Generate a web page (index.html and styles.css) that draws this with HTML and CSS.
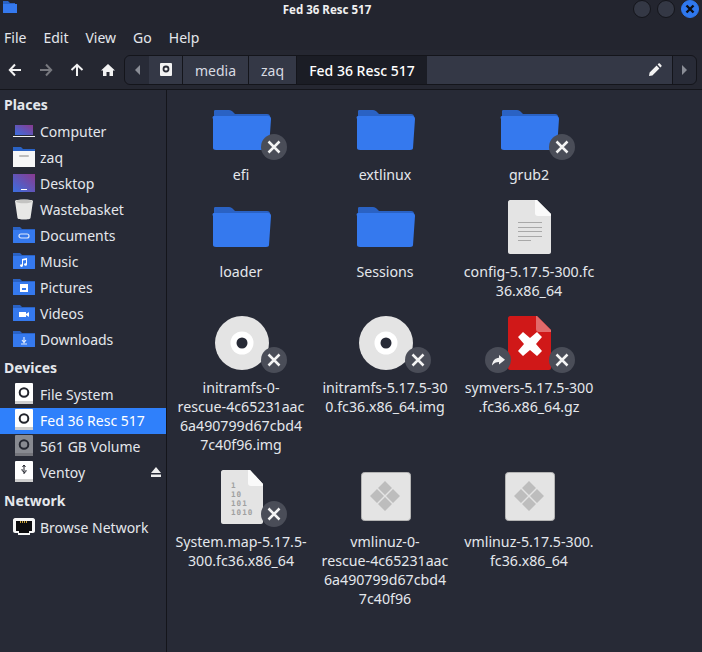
FILE: index.html
```html
<!DOCTYPE html>
<html lang="en">
<head>
    <meta charset="UTF-8">
    <meta name="viewport" content="width=device-width, initial-scale=1.0">
    <title>Fed 36 Resc 517</title>
    <link rel="stylesheet" href="styles.css">
</head>
<body>

<!-- shared icons -->
<svg class="defs" aria-hidden="true">
    <defs>
        <linearGradient id="screen" x1="0" y1="1" x2="1" y2="0">
            <stop offset="0" stop-color="#3a6fe0"/>
            <stop offset="1" stop-color="#8a3a8e"/>
        </linearGradient>
        <symbol id="folder-big" viewBox="0 0 64 64">
            <path fill="#2a62c4" d="M6 12h14c2 0 3 1 4 2l2 2h32c2 0 3 1 3 3v10H5V14c0-1 0-2 1-2z"/>
            <path fill="#3579ee" d="M5 18h54c2 0 3 1 3 3l-2 29c0 1-1 2-3 2H7c-2 0-3-1-3-2L4 21c-1-2 0-3 1-3z"/>
        </symbol>
        <symbol id="disc" viewBox="0 0 64 64">
            <circle cx="33" cy="32" r="27" fill="#e4e4e4"/>
            <circle cx="33" cy="32" r="11.5" fill="#fff"/>
            <circle cx="33" cy="32" r="5.5" fill="#272a36"/>
        </symbol>
        <symbol id="exec" viewBox="0 0 64 64">
            <rect x="8.500" y="7.500" width="49" height="48" rx="3" fill="#e4e4e4" stroke="#b4b4b4" stroke-width="1"/>
            <path fill="#bdbdbd" d="M32 16l7 7-7 7-7-7zM24 24l7 7-7 7-7-7zM40 24l7 7-7 7-7-7zM32 32l7 7-7 7-7-7z"/>
        </symbol>
        <symbol id="small-folder" viewBox="0 0 22 22">
            <path fill="#2a62c4" d="M0 3h7l2 2h13v5H0z"/>
            <path fill="#3579ee" d="M0 6h22v12c0 1 0 1-1 1H1c-1 0-1 0-1-1z"/>
        </symbol>
        <symbol id="drive" viewBox="0 0 22 22">
            <rect x="2" y="0" width="18" height="21" rx="1" fill="#fff"/>
            <rect x="2" y="18" width="18" height="3" fill="#cfcfcf"/>
            <circle cx="11" cy="9.500" r="4.300" fill="none" stroke="#22242c" stroke-width="2"/>
        </symbol>
    </defs>
</svg>

<div class="window">

    <header class="titlebar">
        <svg class="title-icon" width="16" height="16" viewBox="0 0 16 16">
            <path fill="#2a62c4" d="M2 1h5l2 2h5v4H2z"/>
            <path fill="#3579ee" d="M2 4h14v9H3c-1 0-1 0-1-1z"/>
        </svg>
        <span class="title-text">Fed 36 Resc 517</span>
        <div class="window-buttons">
            <span class="win-btn"></span>
            <span class="win-btn"></span>
            <span class="win-btn win-close">
                <svg width="10" height="10" viewBox="0 0 10 10"><path d="M1.500 1.500l7 7M8.500 1.500l-7 7" stroke="#0c0e14" stroke-width="2.400" fill="none"/></svg>
            </span>
        </div>
    </header>

    <nav class="menubar">
        <span class="menu-item">File</span>
        <span class="menu-item">Edit</span>
        <span class="menu-item">View</span>
        <span class="menu-item">Go</span>
        <span class="menu-item">Help</span>
    </nav>

    <div class="toolbar">
        <div class="nav-buttons">
            <svg class="nav-icon" width="14" height="14" viewBox="0 0 14 14"><path d="M13 7H2M7 1.500L1.800 7 7 12.500" fill="none" stroke="#f2f2f2" stroke-width="2"/></svg>
            <svg class="nav-icon dim" width="14" height="14" viewBox="0 0 14 14"><path d="M1 7h11M7 1.500L12.200 7 7 12.500" fill="none" stroke="#f2f2f2" stroke-width="2"/></svg>
            <svg class="nav-icon" width="14" height="14" viewBox="0 0 14 14"><path d="M7 13V2M1.500 7L7 1.800 12.500 7" fill="none" stroke="#f2f2f2" stroke-width="2"/></svg>
            <svg class="nav-icon" width="14" height="14" viewBox="0 0 14 14"><path fill="#f2f2f2" d="M7 1l7 6.500h-2V13H8.500V9h-3v4H2V7.500H0z"/></svg>
        </div>
        <div class="pathbar">
            <span class="path-arrow"><i class="tri tri-left"></i></span>
            <span class="crumb crumb-icon">
                <svg width="14" height="14" viewBox="0 0 14 14">
                    <rect width="12" height="13" x="1" rx="1" fill="#f2f2f2"/>
                    <circle cx="7" cy="6" r="2.500" fill="none" stroke="#2a2c36" stroke-width="1.800"/>
                </svg>
            </span>
            <span class="crumb crumb-media">media</span>
            <span class="crumb crumb-zaq">zaq</span>
            <span class="crumb-active">Fed 36 Resc 517</span>
            <span class="path-entry">
                <svg width="14" height="14" viewBox="0 0 14 14"><path fill="#f2f2f2" d="M1 13l.6-3.400 7-7L11.400 5.400l-7 7zM9.600 1.600l1-1c.4-.4.8-.4 1.200 0l1.600 1.600c.4.400.4.800 0 1.200l-1 1z"/></svg>
            </span>
            <span class="path-arrow path-arrow-end"><i class="tri tri-right"></i></span>
        </div>
    </div>

    <div class="content">

        <aside class="sidebar">
            <div class="side-heading">Places</div>
            <div class="side-row">
                <svg class="side-icon" viewBox="0 0 22 22">
                    <rect x="2" y="5" width="18" height="10" fill="url(#screen)"/>
                    <rect y="16" width="22" height="1" fill="#f4f4f4"/>
                </svg>
                Computer
            </div>
            <div class="side-row">
                <svg class="side-icon" viewBox="0 0 22 22">
                    <path fill="#2a62c4" d="M0 1h8l2 2h12v6H0z"/>
                    <rect y="5" width="22" height="16" fill="#f6f6f6"/>
                    <rect x="6" y="9" width="10" height="2" rx="1" fill="#bdbdbd"/>
                </svg>
                zaq
            </div>
            <div class="side-row">
                <svg class="side-icon" viewBox="0 0 22 22">
                    <rect y="2" width="22" height="18" fill="url(#screen)"/>
                    <rect x="8" y="17" width="6" height="1" fill="#fff"/>
                </svg>
                Desktop
            </div>
            <div class="side-row">
                <svg class="side-icon" viewBox="0 0 22 22">
                    <path fill="#e8e8e6" d="M2 3c0-2 18-2 18 0l-2.500 17c0 2-13 2-13 0z"/>
                    <ellipse cx="11" cy="3.500" rx="8" ry="1.800" fill="#c4c4c2"/>
                </svg>
                Wastebasket
            </div>
            <div class="side-row">
                <svg class="side-icon" viewBox="0 0 22 22">
                    <use href="#small-folder"/>
                    <rect x="6" y="10" width="10" height="4" rx="2" fill="none" stroke="#dfe9fb" stroke-width="1.200"/>
                </svg>
                Documents
            </div>
            <div class="side-row">
                <svg class="side-icon" viewBox="0 0 22 22">
                    <use href="#small-folder"/>
                    <path fill="#fff" d="M9 9l5-1v6.500a1.500 1.300 0 1 1-1-1.200V10l-3 .6v5a1.500 1.300 0 1 1-1-1.200z"/>
                </svg>
                Music
            </div>
            <div class="side-row">
                <svg class="side-icon" viewBox="0 0 22 22">
                    <use href="#small-folder"/>
                    <rect x="7" y="8" width="8" height="8" fill="#fff"/>
                    <rect x="9" y="12" width="4" height="2" fill="#3579ee"/>
                </svg>
                Pictures
            </div>
            <div class="side-row">
                <svg class="side-icon" viewBox="0 0 22 22">
                    <use href="#small-folder"/>
                    <path fill="#fff" d="M6 10h7v5H6zM13 12l3-2v5l-3-2z"/>
                </svg>
                Videos
            </div>
            <div class="side-row">
                <svg class="side-icon" viewBox="0 0 22 22">
                    <use href="#small-folder"/>
                    <path d="M11 9v5M9 12l2 2.500 2-2.500M8 16h6" fill="none" stroke="#dfe9fb" stroke-width="1.200"/>
                </svg>
                Downloads
            </div>

            <div class="side-heading">Devices</div>
            <div class="side-row">
                <svg class="side-icon"><use href="#drive"/></svg>
                File System
            </div>
            <div class="side-row side-selected">
                <svg class="side-icon"><use href="#drive"/></svg>
                Fed 36 Resc 517
            </div>
            <div class="side-row">
                <svg class="side-icon side-icon-off"><use href="#drive"/></svg>
                561 GB Volume
            </div>
            <div class="side-row">
                <svg class="side-icon" viewBox="0 0 22 22">
                    <rect x="2" y="0" width="18" height="21" rx="1" fill="#fff"/>
                    <rect x="2" y="18" width="18" height="3" fill="#cfcfcf"/>
                    <path d="M11 4v9M9.500 6L11 4l1.500 2M11 11L9 9.500V8M11 12l2-1.500V9" fill="none" stroke="#22242c" stroke-width="1"/>
                </svg>
                Ventoy
                <svg class="eject" width="10" height="10" viewBox="0 0 10 10"><path fill="#eeeeee" d="M5 0l5 6H0zM0 7.500h10V10H0z"/></svg>
            </div>

            <div class="side-heading">Network</div>
            <div class="side-row">
                <svg class="side-icon" viewBox="0 0 22 22">
                    <path fill="#f6f6f6" d="M2 2h18c1 0 2 1 2 2v11c0 1-1 2-2 2h-3v2H5v-2H2c-1 0-2-1-2-2V4c0-1 1-2 2-2z"/>
                    <path fill="#0c0c0e" d="M3 5h16v10h-3v2H6v-2H3z"/>
                    <path stroke="#c9a23a" stroke-width="2" stroke-dasharray="1 1" d="M7 6h8"/>
                </svg>
                Browse Network
            </div>
        </aside>

        <main class="files">
            <div class="file">
                <div class="file-icon">
                    <svg class="icon-64"><use href="#folder-big"/></svg>
                    <span class="emblem emblem-right"><svg width="14" height="14" viewBox="0 0 14 14"><path class="cross" d="M1.500 1.500l11 11M12.500 1.500l-11 11"/></svg></span>
                </div>
                <div class="file-name">efi</div>
            </div>
            <div class="file">
                <div class="file-icon"><svg class="icon-64"><use href="#folder-big"/></svg></div>
                <div class="file-name">extlinux</div>
            </div>
            <div class="file">
                <div class="file-icon">
                    <svg class="icon-64"><use href="#folder-big"/></svg>
                    <span class="emblem emblem-right"><svg width="14" height="14" viewBox="0 0 14 14"><path class="cross" d="M1.500 1.500l11 11M12.500 1.500l-11 11"/></svg></span>
                </div>
                <div class="file-name">grub2</div>
            </div>

            <div class="file">
                <div class="file-icon"><svg class="icon-64"><use href="#folder-big"/></svg></div>
                <div class="file-name">loader</div>
            </div>
            <div class="file">
                <div class="file-icon"><svg class="icon-64"><use href="#folder-big"/></svg></div>
                <div class="file-name">Sessions</div>
            </div>
            <div class="file">
                <div class="file-icon">
                    <svg class="icon-64" viewBox="0 0 64 64">
                        <path fill="#e4e4e4" d="M13 5h27l14 14v38c0 1-1 2-2 2H13c-1 0-2-1-2-2V7c0-1 1-2 2-2z"/>
                        <path fill="#fafafa" d="M38 5h2l14 14v2H41c-2 0-3-1-3-3z"/>
                        <path fill="#a8a8a8" d="M21 27h24v1H21zM21 32h24v1H21zM21 36h24v1H21zM21 41h24v1H21zM21 45h13v1H21z"/>
                    </svg>
                </div>
                <div class="file-name">config-5.17.5-300.fc<br>36.x86_64</div>
            </div>

            <div class="file">
                <div class="file-icon">
                    <svg class="icon-64"><use href="#disc"/></svg>
                    <span class="emblem emblem-right"><svg width="14" height="14" viewBox="0 0 14 14"><path class="cross" d="M1.500 1.500l11 11M12.500 1.500l-11 11"/></svg></span>
                </div>
                <div class="file-name">initramfs-0-<br>rescue-4c65231aac<br>6a490799d67cbd4<br>7c40f96.img</div>
            </div>
            <div class="file">
                <div class="file-icon">
                    <svg class="icon-64"><use href="#disc"/></svg>
                    <span class="emblem emblem-right"><svg width="14" height="14" viewBox="0 0 14 14"><path class="cross" d="M1.500 1.500l11 11M12.500 1.500l-11 11"/></svg></span>
                </div>
                <div class="file-name">initramfs-5.17.5-30<br>0.fc36.x86_64.img</div>
            </div>
            <div class="file">
                <div class="file-icon">
                    <svg class="icon-64" viewBox="0 0 64 64">
                        <path fill="#d01818" d="M13 5h27l14 14v38c0 1-1 2-2 2H13c-1 0-2-1-2-2V7c0-1 1-2 2-2z"/>
                        <path fill="#e26a6a" d="M39 5h1l14 14v2H42c-2 0-3-1-3-3z"/>
                        <path fill="#fff" d="M26 21l7 6 7-6 5 5-6 7 6 7-5 5-7-6-7 6-5-5 6-7-6-7z"/>
                    </svg>
                    <span class="emblem emblem-left">
                        <svg width="14" height="14" viewBox="0 0 14 14"><path fill="#f2f2f2" d="M8 2l6 4.800L8 11.500V9C5 9 3 10 1 12.500 1.500 8 4 5 8 4.800z"/></svg>
                    </span>
                    <span class="emblem emblem-right"><svg width="14" height="14" viewBox="0 0 14 14"><path class="cross" d="M1.500 1.500l11 11M12.500 1.500l-11 11"/></svg></span>
                </div>
                <div class="file-name">symvers-5.17.5-300<br>.fc36.x86_64.gz</div>
            </div>

            <div class="file">
                <div class="file-icon">
                    <svg class="icon-64" viewBox="0 0 64 64">
                        <path fill="#e4e4e4" d="M14 5h27l13 14v38c0 1-1 2-2 2H14c-1 0-2-1-2-2V7c0-1 1-2 2-2z"/>
                        <path fill="#fafafa" d="M39 5h2l13 14v2H42c-2 0-3-1-3-3z"/>
                        <text class="bits" x="22" y="23">1</text>
                        <text class="bits" x="22" y="32">10</text>
                        <text class="bits" x="22" y="41">101</text>
                        <text class="bits" x="22" y="50">1010</text>
                    </svg>
                    <span class="emblem emblem-right"><svg width="14" height="14" viewBox="0 0 14 14"><path class="cross" d="M1.500 1.500l11 11M12.500 1.500l-11 11"/></svg></span>
                </div>
                <div class="file-name">System.map-5.17.5-<br>300.fc36.x86_64</div>
            </div>
            <div class="file">
                <div class="file-icon"><svg class="icon-64"><use href="#exec"/></svg></div>
                <div class="file-name">vmlinuz-0-<br>rescue-4c65231aac<br>6a490799d67cbd4<br>7c40f96</div>
            </div>
            <div class="file">
                <div class="file-icon"><svg class="icon-64"><use href="#exec"/></svg></div>
                <div class="file-name">vmlinuz-5.17.5-300.<br>fc36.x86_64</div>
            </div>
        </main>

    </div>
</div>

</body>
</html>
```

FILE: styles.css
```css
body {
    margin: 0;
    background-color: #272a36;
    color: #e4e7ec;
    font-family: "Noto Sans", sans-serif;
    font-size: 14px;
    overflow: hidden;
}

.defs {
    position: absolute;
    width: 0;
    height: 0;
}

.window {
    display: flex;
    flex-direction: column;
    height: 652px;
}

/* title bar */
.titlebar {
    display: flex;
    align-items: center;
    justify-content: center;
    height: 18px;
    padding-right: 48px;
    background-color: #23252f;
    position: relative;
}

.title-icon {
    position: absolute;
    left: 1px;
    top: 0;
}

.title-text {
    font-size: 11.5px;
    font-weight: 700;
    color: #f0f0f0;
}

.window-buttons {
    position: absolute;
    right: 3px;
    top: 0;
    display: flex;
    gap: 6px;
}

.win-btn {
    width: 16px;
    height: 16px;
    border: 1px solid #14151b;
    border-radius: 50%;
    background-color: #343845;
    display: flex;
    align-items: center;
    justify-content: center;
}

.win-close {
    border-color: #2f78ee;
    background-color: #2f78ee;
}

/* menu */
.menubar {
    display: flex;
    align-items: center;
    height: 32px;
    box-sizing: border-box;
    padding: 6px 0 0 4px;
    background-color: #23252f;
}

.menu-item {
    margin-right: 17px;
}

/* toolbar and path bar */
.toolbar {
    display: flex;
    align-items: flex-start;
    height: 40px;
    padding-top: 5px;
    box-sizing: border-box;
    background-color: #252731;
    border-bottom: 1px solid #14151b;
}

.nav-buttons {
    display: flex;
    align-items: center;
    gap: 17px;
    height: 30px;
    padding-left: 8px;
    width: 124px;
    box-sizing: border-box;
}

.nav-icon.dim {
    opacity: 0.4;
}

.pathbar {
    display: flex;
    width: 573px;
    height: 30px;
    box-sizing: border-box;
    border: 1px solid #14151b;
    border-radius: 6px;
    background-color: #282b37;
    overflow: hidden;
}

.path-arrow {
    width: 24px;
    display: flex;
    align-items: center;
    justify-content: center;
    flex-shrink: 0;
}

.tri {
    width: 0;
    height: 0;
    border-top: 5px solid transparent;
    border-bottom: 5px solid transparent;
}

.tri-left {
    border-right: 5px solid #8a8d96;
}

.tri-right {
    border-left: 5px solid #8a8d96;
}

.crumb {
    display: flex;
    align-items: center;
    justify-content: center;
    background-color: #343846;
    border-right: 1px solid #14151b;
    color: #d8dbe2;
    box-sizing: border-box;
    flex-shrink: 0;
}

.crumb-icon {
    width: 34px;
}

.crumb-media {
    width: 66px;
}

.crumb-zaq {
    width: 48px;
}

.crumb-active {
    width: 130px;
    flex-shrink: 0;
    display: flex;
    align-items: center;
    justify-content: center;
    background-color: #1b1d25;
    color: #ffffff;
    font-weight: 500;
}

.path-entry {
    flex: 1;
    display: flex;
    align-items: center;
    justify-content: flex-end;
    padding-right: 10px;
    background-color: #343846;
    border-right: 1px solid #14151b;
}

.path-arrow-end {
    width: 23px;
}

/* main area */
.content {
    flex: 1;
    display: flex;
    min-height: 0;
}

.sidebar {
    width: 166px;
    flex-shrink: 0;
    border-right: 1px solid #14151b;
}

.side-heading {
    height: 29px;
    line-height: 29px;
    padding-left: 4px;
    font-weight: 700;
}

.side-row {
    display: flex;
    align-items: center;
    gap: 5px;
    height: 26px;
    box-sizing: border-box;
    padding: 0 5px 2px 13px;
}

.side-selected {
    background-color: #2f80fb;
    color: #ffffff;
}

.side-icon {
    width: 22px;
    height: 22px;
    flex-shrink: 0;
}

.side-icon-off {
    opacity: 0.45;
}

.eject {
    margin-left: auto;
}

/* file grid */
.files {
    flex: 1;
    display: grid;
    grid-template-columns: repeat(3, 144px);
    grid-auto-rows: min-content;
    row-gap: 11px;
    padding: 8px 0 0 2px;
}

.file {
    display: flex;
    flex-direction: column;
    align-items: center;
}

.file-icon {
    position: relative;
    width: 64px;
    height: 64px;
    margin-bottom: 3px;
}

.icon-64 {
    display: block;
    width: 64px;
    height: 64px;
}

.file-name {
    font-size: 14.2px;
    line-height: 19px;
    text-align: center;
    white-space: nowrap;
}

.emblem {
    position: absolute;
    top: 36px;
    width: 26px;
    height: 26px;
    border-radius: 50%;
    background-color: #4a4d58;
    display: flex;
    align-items: center;
    justify-content: center;
}

.emblem-right {
    left: 52px;
}

.emblem-left {
    left: -12px;
}

.cross {
    fill: none;
    stroke: #f4f4f4;
    stroke-width: 2.500;
}

.bits {
    font-family: "DejaVu Sans Mono", monospace;
    font-size: 7.600px;
    letter-spacing: 1px;
    font-weight: 700;
    fill: #a0a0a0;
}
```
